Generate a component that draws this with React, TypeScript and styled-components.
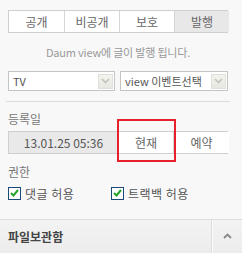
import React from "react";
import styled, { createGlobalStyle } from "styled-components";

const Global = createGlobalStyle`
  html, body { margin: 0; padding: 0; background: #f8f8f8; }
  body { font-family: "Noto Sans CJK KR", "DejaVu Sans", sans-serif; font-size: 12px; color: #555; }
`;

const Panel = styled.div`
  position: relative;
  width: 242px;
  height: 253px;
  overflow: hidden;
  background: #f8f8f8;
`;

const Body = styled.div`
  padding: 10px 14px 0 8px;
  display: flex;
  flex-direction: column;
`;

const Tabs = styled.div`
  display: grid;
  grid-template-columns: 55px 55px 55px 55px;
  height: 23px;
  border: 1px solid #cfcfcf;
  box-sizing: border-box;
  background: #fff;
`;

const Tab = styled.div<{ $active?: boolean; $first?: boolean }>`
  display: flex;
  align-items: center;
  justify-content: center;
  font-size: 12px;
  color: #666;
  background: ${(p) => (p.$active ? "#e8e8e8" : "#fff")};
  border-left: ${(p) => (p.$first ? "none" : "1px solid #d6d6d6")};
  line-height: 1;
`;

const Notice = styled.div`
  margin-top: 12px;
  height: 14px;
  line-height: 14px;
  text-align: center;
  font-size: 11px;
  color: #999;
  letter-spacing: -0.2px;
`;

const SelectRow = styled.div`
  margin-top: 12px;
  display: flex;
  gap: 5px;
`;

const Select = styled.div<{ $w: number }>`
  width: ${(p) => p.$w}px;
  height: 20px;
  box-sizing: border-box;
  border: 1px solid #c4c4c4;
  background: #fff;
  display: flex;
  align-items: center;
  padding: 0 1px 0 4px;
  font-size: 11px;
  color: #555;
`;

const SelectText = styled.span`
  flex: 1;
  white-space: nowrap;
  overflow: hidden;
`;

const ArrowBtn = styled.span`
  flex: none;
  width: 15px;
  height: 15px;
  box-sizing: border-box;
  border: 1px solid #e0e0da;
  background: linear-gradient(#f4f4ee, #e8e8e2);
  display: flex;
  align-items: center;
  justify-content: center;
`;

const Divider = styled.div`
  margin: 10px -2px 0 -2px;
  height: 1px;
  background: #dcdcdc;
`;

const Label = styled.div<{ $mt: number }>`
  margin-top: ${(p) => p.$mt}px;
  height: 14px;
  line-height: 14px;
  font-size: 12px;
  color: #777;
`;

const DateRow = styled.div`
  margin-top: 5px;
  display: grid;
  grid-template-columns: 109px 55px 56px;
  height: 23px;
  border: 1px solid #cfcfcf;
  box-sizing: border-box;
`;

const DateBox = styled.div`
  background: #e9e9e9;
  display: flex;
  align-items: center;
  justify-content: center;
  font-size: 12px;
  color: #555;
`;

const RowBtn = styled.div`
  background: #fff;
  border-left: 1px solid #d6d6d6;
  display: flex;
  align-items: center;
  justify-content: center;
  font-size: 12px;
  color: #666;
`;

const CheckRow = styled.div`
  margin-top: 7px;
  display: flex;
  height: 14px;
  align-items: center;
`;

const CheckItem = styled.label<{ $w: number }>`
  width: ${(p) => p.$w}px;
  display: flex;
  align-items: center;
  gap: 4px;
  font-size: 12px;
  color: #555;
  letter-spacing: 0.5px;
`;

const Box = styled.span`
  width: 13px;
  height: 13px;
  box-sizing: border-box;
  border: 1px solid #1c4a78;
  background: #fff;
  display: flex;
  align-items: center;
  justify-content: center;
`;

const Footer = styled.div`
  position: absolute;
  left: 0;
  right: 0;
  top: 219px;
  height: 34px;
  border-top: 1px solid #dcdcdc;
  background: linear-gradient(#f3f3f3, #ececec);
  display: flex;
`;

const FooterTitle = styled.div`
  flex: 1;
  padding-left: 8px;
  display: flex;
  align-items: center;
  font-size: 12px;
  font-weight: bold;
  color: #444;
  padding-bottom: 2px;
`;

const FooterToggle = styled.div`
  width: 30px;
  border-left: 1px solid #dedede;
  box-shadow: inset 1px 0 0 #fafafa;
  display: flex;
  align-items: center;
  justify-content: center;
  padding-bottom: 2px;
`;

const RedMark = styled.div`
  position: absolute;
  left: 117px;
  top: 119px;
  width: 59px;
  height: 43px;
  box-sizing: border-box;
  border: 2px solid #e8202a;
  pointer-events: none;
`;

const Chevron = () => (
  <svg width="9" height="6" viewBox="0 0 9 6">
    <path d="M1 1 L4.5 4.5 L8 1" fill="none" stroke="#c2c2bc" strokeWidth="1.6" />
  </svg>
);

const Check = () => (
  <svg width="9" height="8" viewBox="0 0 9 8">
    <path d="M1 4 L3.5 6.5 L8 1" fill="none" stroke="#27a32a" strokeWidth="2" />
  </svg>
);

const CaretUp = () => (
  <svg width="9" height="6" viewBox="0 0 9 6">
    <path d="M1 5 L4.5 1.5 L8 5" fill="none" stroke="#888" strokeWidth="1.8" />
  </svg>
);

export default function App() {
  const tabs = ["공개", "비공개", "보호", "발행"];
  return (
    <>
      <Global />
      <Panel>
        <Body>
          <Tabs>
            {tabs.map((t, i) => (
              <Tab key={t} $first={i === 0} $active={i === 3}>
                {t}
              </Tab>
            ))}
          </Tabs>
          <Notice>Daum view에 글이 발행 됩니다.</Notice>
          <SelectRow>
            <Select $w={107}>
              <SelectText>TV</SelectText>
              <ArrowBtn>
                <Chevron />
              </ArrowBtn>
            </Select>
            <Select $w={108}>
              <SelectText>view 이벤트선택</SelectText>
              <ArrowBtn>
                <Chevron />
              </ArrowBtn>
            </Select>
          </SelectRow>
          <Divider />
          <Label $mt={10}>등록일</Label>
          <DateRow>
            <DateBox>13.01.25 05:36</DateBox>
            <RowBtn>현재</RowBtn>
            <RowBtn>예약</RowBtn>
          </DateRow>
          <Label $mt={11}>권한</Label>
          <CheckRow>
            <CheckItem $w={103}>
              <Box>
                <Check />
              </Box>
              댓글 허용
            </CheckItem>
            <CheckItem $w={110}>
              <Box>
                <Check />
              </Box>
              트랙백 허용
            </CheckItem>
          </CheckRow>
        </Body>
        <Footer>
          <FooterTitle>파일보관함</FooterTitle>
          <FooterToggle>
            <CaretUp />
          </FooterToggle>
        </Footer>
        <RedMark />
      </Panel>
    </>
  );
}
